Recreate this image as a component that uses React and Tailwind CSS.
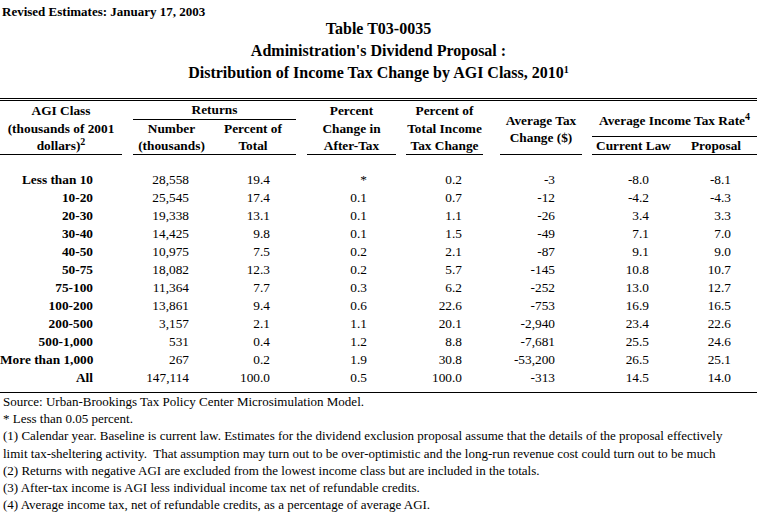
const cols = "grid grid-cols-[122px_11px_77px_86px_11px_89px_10px_77px_17px_82px_10px_83px_82px]"

const rows = [
    ["Less than 10", "28,558", "19.4", "*", "0.2", "-3", "-8.0", "-8.1"],
    ["10-20", "25,545", "17.4", "0.1", "0.7", "-12", "-4.2", "-4.3"],
    ["20-30", "19,338", "13.1", "0.1", "1.1", "-26", "3.4", "3.3"],
    ["30-40", "14,425", "9.8", "0.1", "1.5", "-49", "7.1", "7.0"],
    ["40-50", "10,975", "7.5", "0.2", "2.1", "-87", "9.1", "9.0"],
    ["50-75", "18,082", "12.3", "0.2", "5.7", "-145", "10.8", "10.7"],
    ["75-100", "11,364", "7.7", "0.3", "6.2", "-252", "13.0", "12.7"],
    ["100-200", "13,861", "9.4", "0.6", "22.6", "-753", "16.9", "16.5"],
    ["200-500", "3,157", "2.1", "1.1", "20.1", "-2,940", "23.4", "22.6"],
    ["500-1,000", "531", "0.4", "1.2", "8.8", "-7,681", "25.5", "24.6"],
    ["More than 1,000", "267", "0.2", "1.9", "30.8", "-53,200", "26.5", "25.1"],
    ["All", "147,114", "100.0", "0.5", "100.0", "-313", "14.5", "14.0"],
]

const notes = [
    "Source: Urban-Brookings Tax Policy Center Microsimulation Model.",
    "* Less than 0.05 percent.",
    "(1) Calendar year. Baseline is current law. Estimates for the dividend exclusion proposal assume that the details of the proposal effectively",
    "limit tax-sheltering activity.  That assumption may turn out to be over-optimistic and the long-run revenue cost could turn out to be much",
    "(2) Returns with negative AGI are excluded from the lowest income class but are included in the totals.",
    "(3) After-tax income is AGI less individual income tax net of refundable credits.",
    "(4) Average income tax, net of refundable credits, as a percentage of average AGI.",
]

function Sup({ children }) {
    return <sup className="text-[10px] font-bold">{children}</sup>
}

export default function App() {
    return (
        <div className="w-[757px] h-[512px] overflow-hidden bg-white text-black font-['Liberation_Serif','Times_New_Roman',serif] text-[13.33px]">
            <div className="pt-[4px] pl-[2px] leading-[16px] font-bold text-[13px]">Revised Estimates: January 17, 2003</div>

            {/* title */}
            <div className="-mt-[2px] text-center font-bold text-[16px] leading-[22px]">
                <div>Table T03-0035</div>
                <div>Administration's Dividend Proposal :</div>
                <div>
                    Distribution of Income Tax Change by AGI Class, 2010<Sup>1</Sup>
                </div>
            </div>

            {/* header */}
            <div className={`${cols} grid-rows-[19px_17px_18px] mt-[14px] border-t-[3px] border-double border-black font-bold text-center`}>
                <div className="col-start-1 row-start-1 leading-[19px]">AGI Class</div>
                <div className="col-start-1 row-start-2 leading-[17px] whitespace-nowrap">(thousands of 2001</div>
                <div className="col-start-1 row-start-3 leading-[17px] border-b border-black">
                    dollars)<Sup>2</Sup>
                </div>

                <div className="col-start-3 col-end-5 row-start-1 leading-[18px] border-b border-black">Returns</div>
                <div className="col-start-3 row-start-2 leading-[17px]">Number</div>
                <div className="col-start-3 row-start-3 leading-[17px] border-b border-black">(thousands)</div>
                <div className="col-start-4 row-start-2 leading-[17px]">Percent of</div>
                <div className="col-start-4 row-start-3 leading-[17px] border-b border-black">Total</div>

                <div className="col-start-6 row-start-1 leading-[19px]">Percent</div>
                <div className="col-start-6 row-start-2 leading-[17px]">Change in</div>
                <div className="col-start-6 row-start-3 leading-[17px] border-b border-black">After-Tax</div>

                <div className="col-start-8 row-start-1 leading-[19px]">Percent of</div>
                <div className="col-start-8 row-start-2 leading-[17px]">Total Income</div>
                <div className="col-start-8 row-start-3 leading-[17px] border-b border-black">Tax Change</div>

                <div className="col-start-10 row-start-1 row-end-4 flex flex-col justify-center pt-[2px] leading-[17px] border-b border-black">
                    <div>Average Tax</div>
                    <div>Change ($)</div>
                </div>

                <div className="col-start-12 col-end-14 row-start-1 row-end-3 flex items-center justify-center pt-[3px] leading-[17px] border-b border-black">
                    <span>
                        Average Income Tax Rate<Sup>4</Sup>
                    </span>
                </div>
                <div className="col-start-12 row-start-3 leading-[17px] border-b border-black">Current Law</div>
                <div className="col-start-13 row-start-3 leading-[17px] border-b border-black">Proposal</div>
            </div>

            {/* data */}
            <div className="mt-[16px]">
                {rows.map((r, i) => (
                    <div key={i} className={`${cols} h-[18px] leading-[18px] text-right`}>
                        <div className="pr-[29px] font-bold whitespace-nowrap">{r[0]}</div>
                        <div />
                        <div className="pr-[21px]">{r[1]}</div>
                        <div className="pr-[26px]">{r[2]}</div>
                        <div />
                        <div className="pr-[29px]">{r[3]}</div>
                        <div />
                        <div className="pr-[21px]">{r[4]}</div>
                        <div />
                        <div className="pr-[27px]">{r[5]}</div>
                        <div />
                        <div className="pr-[26px]">{r[6]}</div>
                        <div className="pr-[26px]">{r[7]}</div>
                    </div>
                ))}
            </div>

            {/* footnotes */}
            <div className="mt-[5px] border-t border-black pl-[3px] text-[13px] leading-[17.2px] whitespace-pre overflow-hidden">
                {notes.map((n, i) => (
                    <div key={i}>{n}</div>
                ))}
            </div>
        </div>
    )
}
